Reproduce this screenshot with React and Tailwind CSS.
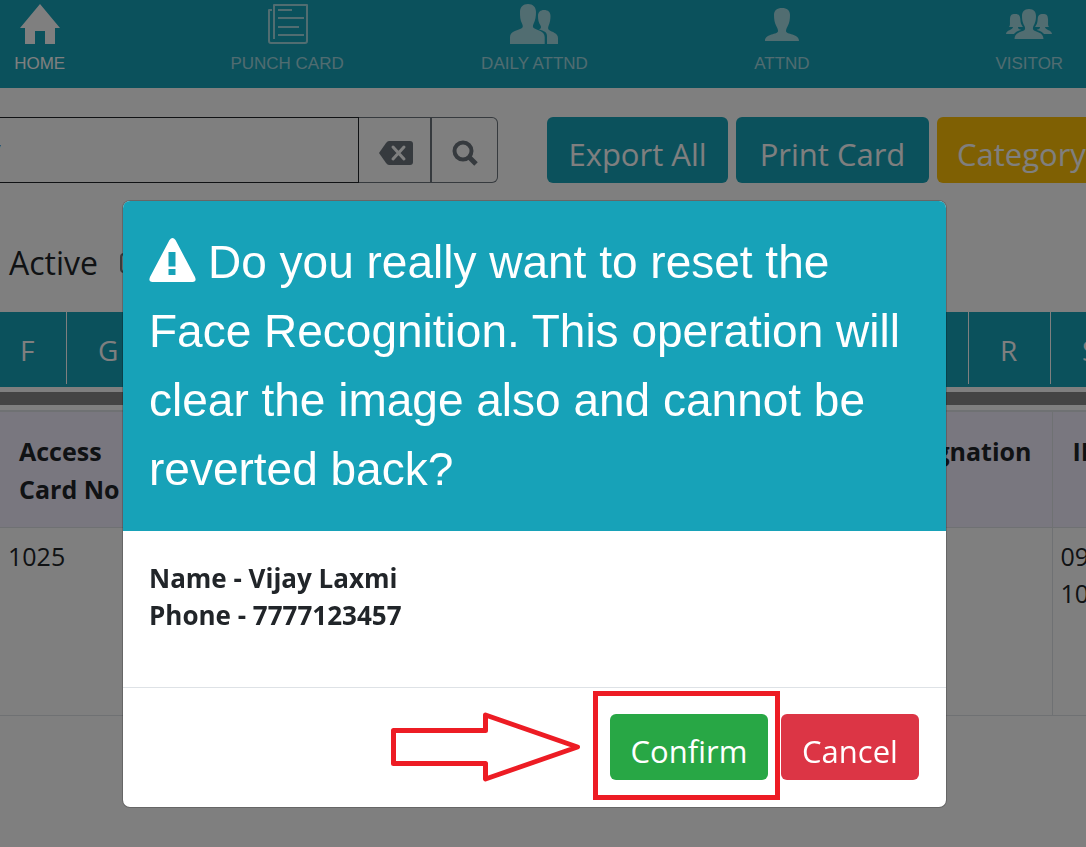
import React from "react";

const HomeIcon = () => (
  <svg width="48" height="48" viewBox="0 0 48 48" fill="currentColor" aria-hidden="true">
    <path d="M24 4 4 28h5v16h10V31h10v13h10V28h5z" />
  </svg>
);

const PunchIcon = () => (
  <svg width="48" height="48" viewBox="0 0 48 48" fill="none" stroke="currentColor" strokeWidth="2" aria-hidden="true">
    <path d="M11 39V5h33v36q0 2-2 2H8q-2 0-2-2V10h3" strokeLinejoin="round" />
    <path d="M15 10h14M15 18h26M15 27h21M15 35h26" />
  </svg>
);

const DailyIcon = () => (
  <svg width="48" height="48" viewBox="0 0 48 48" fill="currentColor" aria-hidden="true">
    <path d="M18 4c5 0 8 3 8 8 0 4-.5 8-2.500 12-.8 2-.8 3 .2 4 3 2 11 3 11 9v7H0v-7c0-6 9-7 12-9 1-1 1-2 .2-4C10 20 10 16 10 12c0-5 3-8 8-8z" />
    <path d="M34 10c4 0 6.500 2 6.500 6 0 3-.5 7-2 10-.6 2-.5 3 .5 4 3 2 9 3 9 8v6H37v-8c0-4-3-5-8-6.500 2-1 2.500-2 1.500-4-2-3-2.500-6-2.500-9.500 0-4 2.500-6 6-6z" />
  </svg>
);

const PersonIcon = () => (
  <svg width="48" height="48" viewBox="0 0 48 48" fill="currentColor" aria-hidden="true">
    <path d="M24 8c5 0 8 2.500 8 7 0 4-.5 8-2.500 11.500-1 2-1.500 3-1.500 4.500 0 4 13 2 13 10H7c0-8 13-6 13-10 0-1.500-.5-2.500-1.500-4.500C16.500 23 16 19 16 15c0-4.500 3-7 8-7z" />
  </svg>
);

const VisitorIcon = () => (
  <svg width="48" height="48" viewBox="0 0 48 48" fill="currentColor" aria-hidden="true">
    <path d="M24 9c5 0 7 3 7 7 0 5-1 7-2.500 10-.8 2-.8 3 0 4 2 2 10 2 10 9h-29c0-7 8-7 10-9 .8-1 .8-2 0-4C18 23 17 21 17 16c0-4 2-7 7-7z" />
    <path d="M10 14c4 0 5 1.500 5.300 5 .3 4 .7 5 2.700 8h-5c0 3 3 2 3 3-4 1-5 2-7 4H1c0-4 7-4 7-7H4c1.500-2 .7-4 1-8 .2-4 1.500-5 5-5zM38 14c-4 0-5 1.500-5.300 5-.3 4-.7 5-2.700 8h5c0 3-3 2-3 3 4 1 5 2 7 4h8c0-4-7-4-7-7h4c-1.500-2-.7-4-1-8-.2-4-1.500-5-5-5z" />
  </svg>
);

const navItems = [
  { label: "HOME", Icon: HomeIcon, active: true },
  { label: "PUNCH CARD", Icon: PunchIcon },
  { label: "DAILY ATTND", Icon: DailyIcon },
  { label: "ATTND", Icon: PersonIcon },
  { label: "VISITOR", Icon: VisitorIcon },
];

const letters = "GHIJKLMNOPQRS".split("");

const actionButton = "h-[66px] shrink-0 rounded-md px-[20px] pt-[8px] text-[31px] leading-none text-white";

function Page() {
  return (
    <div>
      <nav className="grid h-[88px] grid-cols-5 bg-[#17a2b8] -ml-[84px] -mr-[67px] font-['Liberation_Sans',sans-serif]">
        {navItems.map(({ label, Icon, active }) => (
          <a key={label} href="#" className={active ? "flex flex-col items-center text-white" : "flex flex-col items-center text-white/60"}>
            <Icon />
            <span className="pt-[5px] text-[17px] leading-[22px]">{label}</span>
          </a>
        ))}
      </nav>

      <div className="mt-[29px] flex">
        <div className="-ml-[60px] flex h-[66px] w-[558px] shrink-0 text-[#6c757d]">
          <input
            aria-label="Search"
            defaultValue="y"
            className="min-w-0 flex-1 border border-[#212529] bg-white pl-[44px] text-[31px] text-[#212529]"
          />
          <button aria-label="Clear" className="flex w-[73px] items-center justify-center border-y border-r-2 border-[#6c757d] pt-[6px] pl-[2px]">
            <svg width="34" height="24" viewBox="0 0 34 24" aria-hidden="true">
              <path d="M10 0h21q3 0 3 3v18q0 3-3 3H10q-1.500 0-3-2L0 12 7 2q1.500-2 3-2z" fill="currentColor" />
              <path d="m14 6 11 12M25 6 14 18" stroke="#fff" strokeWidth="3" strokeLinecap="round" />
            </svg>
          </button>
          <button aria-label="Find" className="flex w-[66px] items-center justify-center rounded-r-md border-y border-r border-[#6c757d] pt-[6px]">
            <svg width="26" height="26" viewBox="0 0 26 26" fill="none" stroke="currentColor" aria-hidden="true">
              <circle cx="11" cy="11" r="8.500" strokeWidth="4" />
              <path d="m17 17 7 7" strokeWidth="5" />
            </svg>
          </button>
        </div>
        <div className="ml-[49px] flex gap-2">
          <button className={`${actionButton} w-[181px] bg-[#17a2b8]`}>Export All</button>
          <button className={`${actionButton} w-[193px] bg-[#17a2b8]`}>Print Card</button>
          <button className={`${actionButton} bg-[#ffc107]`}>Category</button>
        </div>
      </div>

      <div className="mt-[56px] flex h-[48px] items-center gap-[22px] pl-[9px] text-[32px]">
        <label htmlFor="active">Active</label>
        <input id="active" type="checkbox" className="size-[20px] appearance-none rounded-sm border-2 border-[#767676]" />
      </div>

      <div className="mt-[25px] flex h-[75px] items-start overflow-hidden bg-[#17a2b8] text-[28px] text-white">
        <a href="#" className="flex h-[72px] w-[67px] shrink-0 items-center border-r border-white pt-[4px] pl-[20px]">F</a>
        {letters.map((letter) => (
          <a key={letter} href="#" className="flex h-[72px] w-[82px] shrink-0 items-center border-r border-white pt-[4px] pl-[31px]">
            {letter}
          </a>
        ))}
      </div>
      <div className="my-[5px] h-[13px] bg-[#888888]" />

      <table className="w-full table-fixed border-t-2 border-[#dee2e6] text-[25px]">
        <colgroup>
          <col className="w-[140px]" />
          <col />
          <col className="w-[34px]" />
        </colgroup>
        <thead>
          <tr className="h-[116px] bg-[#f3eeff] align-top leading-[38px]">
            <th className="pt-[20px] pl-[19px] text-left whitespace-nowrap">Access<br />Card No</th>
            <th className="border-r border-[#dee2e6] pt-[20px] pr-[20px] text-right">Designation</th>
            <th className="pt-[20px] pl-[20px] text-left whitespace-nowrap">IN</th>
          </tr>
        </thead>
        <tbody>
          <tr className="h-[188px] border-y border-[#dee2e6] align-top leading-[37px]">
            <td className="pt-[10px] pl-[8px]">1025</td>
            <td className="border-r border-[#dee2e6]" />
            <td className="pt-[10px] pl-[8px]">09<br />10</td>
          </tr>
        </tbody>
      </table>
    </div>
  );
}

function ResetDialog() {
  return (
    <div
      role="dialog"
      aria-modal="true"
      aria-labelledby="reset-title"
      className="w-full max-w-[825px] overflow-hidden rounded-lg border border-black/20 bg-white bg-clip-padding"
    >
      <h2 id="reset-title" className="bg-[#17a2b8] px-[26px] py-[27px] font-['Liberation_Sans',sans-serif] text-[46px] leading-[69px] text-white">
        <svg width="47" height="44" viewBox="0 0 47 44" className="mr-[12px] inline-block align-[-4px]" aria-hidden="true">
          <path
            fillRule="evenodd"
            fill="currentColor"
            d="M20.500 2q3-4 6 0L46 39q2 5-2.500 5h-40Q-1 44 1 39zM19.500 14v14.500h7V14zM19.500 31v6h7v-6z"
          />
        </svg>
        Do you really want to reset the Face Recognition. This operation will clear the image also and cannot be reverted back?
      </h2>
      <div className="h-[156px] px-[26px] pt-[29px] text-[26px] leading-[37px] font-bold">
        <p>Name - Vijay Laxmi</p>
        <p>Phone - 7777123457</p>
      </div>
      <div className="flex justify-end gap-[13px] border-t border-[#dee2e6] px-[27px] pt-[26px] pb-[27px]">
        <div className="relative">
          <button className={`${actionButton} w-[158px] bg-[#28a745]`}>Confirm</button>
          <div className="pointer-events-none absolute -top-[23px] -right-[12px] -bottom-[20px] -left-[17px] border-5 border-[#ed1c24]" />
          <svg
            width="192"
            height="72"
            viewBox="0 0 192 72"
            className="pointer-events-none absolute right-[187px] -bottom-[2px]"
            aria-hidden="true"
          >
            <path d="M4.500 20.500h92V5l92 32-92 32V53.500h-92z" fill="none" stroke="#ed1c24" strokeWidth="5" strokeLinejoin="round" />
          </svg>
        </div>
        <button className={`${actionButton} w-[138px] bg-[#dc3545]`}>Cancel</button>
      </div>
    </div>
  );
}

export default function App() {
  return (
    <div className="relative min-h-screen overflow-hidden bg-white font-['Open_Sans','Noto_Sans',sans-serif] text-[#212529]">
      <Page />
      <div className="fixed inset-0 flex items-start justify-center bg-black/50 pt-[200px] pr-[17px]">
        <ResetDialog />
      </div>
    </div>
  );
}
